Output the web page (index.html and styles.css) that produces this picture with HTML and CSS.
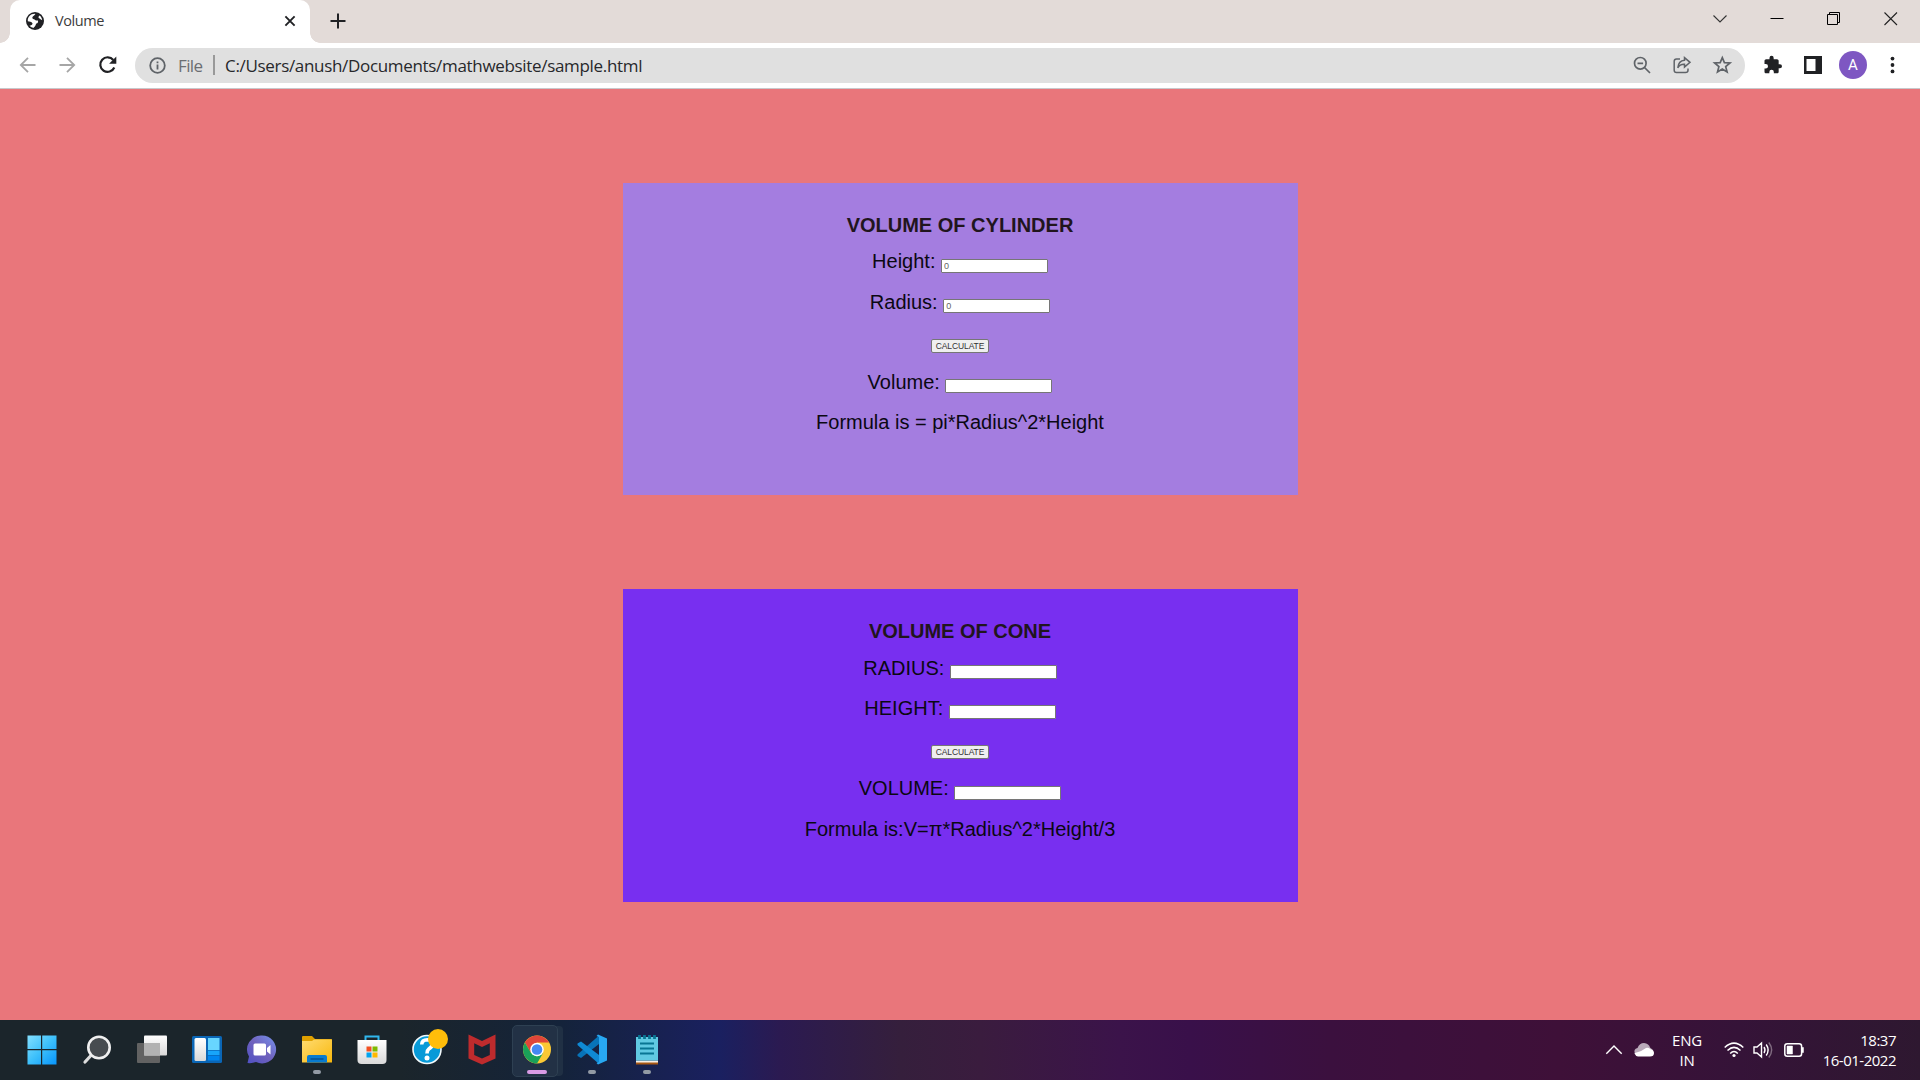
FILE: index.html
```html
<!DOCTYPE html>
<html lang="en">
<head>
<meta charset="utf-8">
<title>Volume</title>
<link rel="stylesheet" href="styles.css">
</head>
<body>
<div class="screen">
  <header class="tabstrip">
    <div class="tab">
      <svg class="favicon" width="18" height="18" viewBox="0 0 18 18"><circle cx="9" cy="9" r="9" fill="#202124"/><path d="M9.400 1.900C8 4 6.500 3.800 6.300 5.700 6.300 7 8 7 8.600 7.600 9.400 8.800 10.800 8.600 11.900 8.500 12.500 10 11.800 11.300 10.300 11.500 9.600 12.800 9.500 14.500 7.300 15.900 6.200 15.800 4.500 15 3.500 13.600 5 13.500 6.700 13 6.500 11.200 5.500 9.500 3.500 9.800 1.800 9.200 1.500 5 4.800 1.500 9.400 1.900ZM13.500 3.500C12.300 4.500 12 6 13.600 6.600 14.600 7 15 8 16.200 8.200 16 6.200 15 4.500 13.500 3.500Z" fill="#fff"/></svg>
      <span class="tab-title">Volume</span>
      <svg width="12" height="12" viewBox="0 0 12 12" fill="none" stroke="#202124" stroke-width="1.9"><path d="M1.400 1.400 10.600 10.600M10.600 1.400 1.400 10.600"/></svg>
    </div>
    <svg class="new-tab" width="16" height="16" viewBox="0 0 16 16" fill="none" stroke="#202124" stroke-width="2"><path d="M8 .5V15.500M.5 8H15.500"/></svg>
    <div class="window-controls">
      <svg width="14" height="14" viewBox="0 0 14 14" fill="none" stroke="#333" stroke-width="1.100"><path d="M.5 3.500 7 10 13.500 3.500"/></svg>
      <svg width="14" height="14" viewBox="0 0 14 14" fill="none" stroke="#000"><path d="M.5 6.500H13.500"/></svg>
      <svg width="14" height="14" viewBox="0 0 14 14" fill="none" stroke="#000"><path d="M.5 2.500H10.500V12.500H.5ZM2.500 2.500V.5H12.500V10.500H10.500"/></svg>
      <svg width="14" height="14" viewBox="0 0 14 14" fill="none" stroke="#222" stroke-width="1.100"><path d="M.5 .5 13 13M13 .5 .5 13"/></svg>
    </div>
  </header>

  <nav class="toolbar">
    <div class="nav-buttons">
      <svg width="18" height="18" viewBox="0 0 18 18" fill="none" stroke="#a6a6a6" stroke-width="1.800"><path d="M16.500 9H2M9 1.800 1.800 9 9 16.200"/></svg>
      <svg width="18" height="18" viewBox="0 0 18 18" fill="none" stroke="#a6a6a6" stroke-width="1.800"><path d="M.5 9H15M8 1.800 15.200 9 8 16.200"/></svg>
      <svg width="18" height="18" viewBox="0 0 18 18"><path d="M14.300 4A7.300 7.300 0 1 0 15.300 11.500" fill="none" stroke="#202124" stroke-width="2.200"/><path d="M17.300 .6V7.800H10.100Z" fill="#202124"/></svg>
    </div>
    <div class="omnibox">
      <svg width="17" height="17" viewBox="0 0 17 17" fill="none" stroke="#5f6368" stroke-width="1.800"><circle cx="8.500" cy="8.500" r="7.300"/><path d="M8.500 7.500V12.500M8.500 4.400V6.200"/></svg>
      <span class="scheme">File</span>
      <span class="divider"></span>
      <span class="url">C:/Users/anush/Documents/mathwebsite/sample.html</span>
      <div class="page-actions">
        <svg width="18" height="18" viewBox="0 0 18 18" fill="none" stroke="#5f6368" stroke-width="1.700"><circle cx="7.300" cy="7.300" r="5.800"/><path d="M4.500 7.300H10.100M11.500 11.500 17 17"/></svg>
        <svg width="18" height="18" viewBox="0 0 18 18" fill="none" stroke="#5f6368" stroke-width="1.500"><path d="M7 3H3.500Q1.200 3 1.200 5.300V14.200Q1.200 16.500 3.500 16.500H12.500Q15 16.500 15 14.200V12.500M11.500 1.700 17 6.300 11.500 11V8.300Q7 8 4.800 11.800 5.500 4.800 11.500 4.300Z"/></svg>
        <svg width="18" height="18" viewBox="0 0 18 18" fill="none" stroke="#5f6368" stroke-width="1.700"><path d="M9.300 1.700 11.400 6.600 17 7 12.700 10.600 14.100 16 9.300 13.100 4.500 16 5.900 10.600 1.600 7 7.200 6.600Z"/></svg>
      </div>
    </div>
    <div class="browser-actions">
      <svg width="20" height="20" viewBox="0 0 24 24" fill="#202124"><path d="M21.500 11H20V7c0-1.100-.9-2-2-2h-4V3.500a2.500 2.500 0 0 0-5 0V5H5c-1.100 0-2 .9-2 2v3.800h1.500a2.700 2.700 0 0 1 0 5.400H3V20c0 1.100.9 2 2 2h3.800v-1.500a2.700 2.700 0 0 1 5.400 0V22H18c1.100 0 2-.9 2-2v-4h1.500a2.500 2.500 0 0 0 0-5z"/></svg>
      <svg width="18" height="18" viewBox="0 0 18 18"><path d="M0 0H18V18H0ZM2.500 3V15H11.500V3Z" fill="#202124" fill-rule="evenodd"/></svg>
      <span class="avatar">A</span>
      <svg width="4" height="18" viewBox="0 0 4 18" fill="#202124"><circle cx="1.500" cy="2.600" r="1.900"/><circle cx="1.500" cy="9" r="1.900"/><circle cx="1.500" cy="15.400" r="1.900"/></svg>
    </div>
  </nav>

  <main class="page">
    <section class="card cylinder">
      <h1>VOLUME OF CYLINDER</h1>
      <div class="row"><label>Height:</label><input placeholder="0"></div>
      <div class="row"><label>Radius:</label><input placeholder="0"></div>
      <div class="row"><button>CALCULATE</button></div>
      <div class="row"><label>Volume:</label><input></div>
      <div class="row">Formula is = pi*Radius^2*Height</div>
    </section>
    <section class="card cone">
      <h1>VOLUME OF CONE</h1>
      <div class="row"><label>RADIUS:</label><input></div>
      <div class="row"><label>HEIGHT:</label><input></div>
      <div class="row"><button>CALCULATE</button></div>
      <div class="row"><label>VOLUME:</label><input></div>
      <div class="row">Formula is:V=π*Radius^2*Height/3</div>
    </section>
  </main>

  <footer class="taskbar">
    <svg width="0" height="0" class="defs"><defs>
      <linearGradient id="win" x1="0" y1="0" x2="1" y2="1" gradientUnits="objectBoundingBox"><stop stop-color="#84e0ff"/><stop offset=".5" stop-color="#3dc0fb"/><stop offset="1" stop-color="#0794fb"/></linearGradient>
      <linearGradient id="white" x1="0" y1="0" x2="0" y2="1"><stop stop-color="#fff"/><stop offset="1" stop-color="#d9d9d9"/></linearGradient>
      <linearGradient id="chat" x1="0" y1="1" x2="1" y2="0"><stop stop-color="#4f50c4"/><stop offset=".5" stop-color="#7062bd"/><stop offset="1" stop-color="#7593ee"/></linearGradient>
      <linearGradient id="folder" x1="0" y1="0" x2="1" y2="1"><stop stop-color="#ffdb70"/><stop offset="1" stop-color="#f8b80d"/></linearGradient>
    </defs></svg>
    <div class="apps">
      <div class="app"><svg viewBox="0 0 30 30"><path d="M.5 .5H14V14H.5ZM15.200 .5H29.500V14H15.200ZM.5 15.200H14V29.500H.5ZM15.200 15.200H29.500V29.500H15.200Z" fill="url(#win)"/></svg></div>
      <div class="app"><svg viewBox="0 0 30 30"><path d="M8.500 21 3 27" stroke="#ddd" stroke-width="3.200" stroke-linecap="round"/><circle cx="17" cy="12.500" r="10.700" fill="#474c50" stroke="#f0f0f0" stroke-width="2.600"/></svg></div>
      <div class="app"><svg viewBox="0 0 30 30"><rect y="8" width="23" height="20" rx="1" fill="#626262"/><rect x="7" y=".5" width="23" height="20" rx="1" fill="url(#white)"/><path d="M7 8H23V20.500H7Z" fill="#b2b2b2"/></svg></div>
      <div class="app"><svg viewBox="0 0 30 30"><rect y="1" width="30" height="27" rx="1.500" fill="#0a66b6"/><rect x="2.500" y="3" width="11.500" height="23" rx="1.500" fill="url(#white)"/><path d="M16 3H27.500V15H16Z" fill="#68d5ff"/><path d="M16 15.700H27.500V20H16Z" fill="#18a5fa"/><path d="M16 20.700H27.500V25.500H16Z" fill="#0085ef"/></svg></div>
      <div class="app"><svg viewBox="0 0 30 30"><path d="M15 .5A14 14 0 1 1 9 27.100Q5 28.500 .5 28L2 21.500A14 14 0 0 1 15 .5Z" fill="url(#chat)"/><rect x="6.500" y="8.500" width="12.500" height="12" rx="1.500" fill="#fff"/><path d="M20 13 23.500 10V19.500L20 16.500Z" fill="#fff"/></svg></div>
      <div class="app running"><svg viewBox="0 0 30 30"><path d="M0 2Q0 1 1 1H10L13 4H29Q30 4 30 5V12H0Z" fill="#dfa000"/><path d="M0 6H10L12 4.500H30V27.500H0Z" fill="url(#folder)"/><path d="M5 27.500V22Q5 20 7 20H23Q25 20 25 22V27.500Z" fill="#087bd0"/><path d="M8.500 24H21.500" stroke="#064b8a" stroke-width="1.300"/></svg></div>
      <div class="app"><svg viewBox="0 0 30 30"><path d="M8.500 6V1.500H21.500V6" fill="none" stroke="#30b7ee" stroke-width="2"/><path d="M.5 5H29.500V25Q29.500 29 25.500 29H4.500Q.5 29 .5 25Z" fill="url(#white)"/><path d="M9.500 11.500H14.500V16.500H9.500Z" fill="#f25022"/><path d="M15.500 11.500H20.500V16.500H15.500Z" fill="#7fba00"/><path d="M9.500 17.500H14.500V22.500H9.500Z" fill="#00a4ef"/><path d="M15.500 17.500H20.500V22.500H15.500Z" fill="#ffb900"/></svg></div>
      <div class="app help"><svg viewBox="0 0 30 30"><circle cx="15" cy="14.500" r="14" fill="#079ad8" stroke="#f1f8fa" stroke-width="1.600"/><path d="M9.700 9.500Q10 4.800 15.200 4.800 20.500 5 20.300 9.500 20 12 16.800 14 15 15.300 15 18.500" fill="none" stroke="#fff" stroke-width="3.600"/><circle cx="15" cy="23" r="2.500" fill="#fff"/></svg><span class="badge"></span></div>
      <div class="app"><svg viewBox="0 0 30 30"><path d="M1.500-.5 15 6 28.500-.5V23.500L15 29.500 1.500 23.500ZM7.200 8.300V20L15 23.600 22.800 20V8.300L15 12Z" fill="#be2b2d" fill-rule="evenodd"/></svg></div>
      <div class="app active"><svg viewBox="0 0 30 30"><circle cx="15" cy="14.500" r="14" fill="#fbc934"/><path d="M2.880 7.500A14 14 0 0 1 27.120 7.500H15L9 18Z" fill="#e04539"/><path d="M2.880 7.500A14 14 0 0 0 15 28.500L21.100 18 15 21.500 9 18Z" fill="#1aa159"/><circle cx="15" cy="14.500" r="6.800" fill="#fff"/><circle cx="15" cy="14.500" r="5.300" fill="#4688f1"/></svg></div>
      <div class="app running"><svg viewBox="0 0 30 30"><path d="M.5 19.500 22 .5V9L4 23 .5 21Z" fill="#0873b8"/><path d="M.5 8.500 4 6.500 22 20V29L.5 10Z" fill="#0f8ad5"/><path d="M21-.5 30 3.500V25.500L21 29.500 19.500 28 22 27V2L19.500 1Z" fill="#28a8f2"/></svg></div>
      <div class="app running"><svg viewBox="0 0 30 30"><path d="M4 26H26V29.500H4Z" fill="#a85713"/><path d="M4 25.500H26V27.500H4Z" fill="#f4eee6"/><path d="M4 2H26V25.500H4Z" fill="#60c9e2"/><path d="M8 8.500H22M8 13.500H22M8 18.500H22" stroke="#087593" stroke-width="2"/><path d="M7.500 0V4M12.500 0V4M17.500 0V4M22.500 0V4" stroke="#087593" stroke-width="2.800"/></svg></div>
    </div>
    <div class="tray">
      <svg width="18" height="12" viewBox="0 0 18 12" fill="none" stroke="#fff" stroke-width="1.400"><path d="M1.300 9.800 9 2 16.700 9.800"/></svg>
      <svg class="cloud" width="20" height="14" viewBox="0 0 20 14"><path d="M3.500 5Q5.500 0 10 0 15 .5 16 4.500L19 7 17 11 1 11Q-1 6 3.500 5Z" fill="#b9aab9"/><path d="M1 10Q7 9 12 5 15 4 16.500 6.200 20 7 20 10 20 13.500 16 13.500H4Q1.500 13 .5 10.500Z" fill="#fff"/></svg>
      <span class="language">ENG<br>IN</span>
      <svg class="wifi" width="20" height="16" viewBox="0 0 20 16" fill="none" stroke="#fff" stroke-width="1.500"><path d="M.7 5.500Q10-3.200 19.300 5.500M3.500 8.500Q10 2.300 16.500 8.500M6.200 11.500Q10 7.700 13.800 11.500"/><circle cx="10" cy="13.500" r="1.600" fill="#fff" stroke="none"/></svg>
      <svg class="sound" width="20" height="18" viewBox="0 0 20 18" fill="none" stroke="#fff" stroke-width="1.400"><path d="M1 6H4L8.500 2V16L4 12H1ZM11 6Q13 9 11 12M13.200 3.500Q17 9 13.200 14.500"/><path d="M15.800 1.500Q21.500 9 15.800 16.500" stroke="#806c80"/></svg>
      <svg class="battery" width="21" height="14" viewBox="0 0 21 14"><rect x=".8" y=".8" width="16.800" height="12.400" rx="2.500" fill="none" stroke="#fff" stroke-width="1.500"/><path d="M3 3H8.500V11H3ZM18 4.500H19.500V9.500H18Z" fill="#fff" stroke="#fff" stroke-width=".5"/></svg>
      <span class="clock">18:37<br>16-01-2022</span>
    </div>
  </footer>
</div>
</body>
</html>
```
FILE: styles.css
```css
* { box-sizing: border-box; }
body { margin: 0; overflow: hidden; font-family: "Open Sans", sans-serif; }
svg { display: block; flex: none; overflow: visible; }
.screen { display: flex; flex-direction: column; width: 1920px; height: 1080px; }

.tabstrip { display: flex; height: 43px; background: #e3dbd8; }
.tab {
  position: relative; display: flex; align-items: center;
  width: 300px; height: 43px; margin-left: 10px; padding: 0 14px 1px 16px;
  border-radius: 10px 10px 0 0; background: #fff;
}
.tab::before, .tab::after {
  content: ""; position: absolute; bottom: 0; width: 10px; height: 10px;
}
.tab::before { left: -10px; background: radial-gradient(circle at 0 0, transparent 9.500px, #fff 10px); }
.tab::after { right: -10px; background: radial-gradient(circle at 100% 0, transparent 9.500px, #fff 10px); }
.tab-title { flex: 1; margin: 0 0 2px 11px; font-size: 14.5px; letter-spacing: -.4px; color: #3c3c3c; }
.new-tab { margin: 13px 0 0 19.5px; }
.window-controls { display: flex; gap: 43px; margin: 12px 22px 0 auto; }

.toolbar { display: flex; align-items: center; height: 46px; padding-bottom: 1px; background: #fff; border-bottom: 1px solid #c8c8cb; }
.nav-buttons { display: flex; gap: 22px; width: 135px; padding-left: 19px; }
.omnibox { display: flex; align-items: center; width: 1610px; height: 35px; padding: 0 14px 0 14px; border-radius: 18px; background: #e0e0e0; }
.scheme { width: 26px; margin-left: 12px; font-size: 17px; letter-spacing: -.6px; color: #6b6e72; }
.divider { width: 2px; height: 20px; margin: 0 10px 0 9px; background: #999; }
.url { font-size: 17px; letter-spacing: -.32px; color: #27282b; white-space: nowrap; }
.page-actions { display: flex; gap: 22px; margin-left: auto; }
.browser-actions { display: flex; align-items: center; margin-left: 17px; }
.browser-actions svg:nth-child(2) { margin-left: 22px; }
.avatar { display: grid; place-items: center; width: 28px; height: 28px; margin: 0 24px 0 17px; border-radius: 50%; background: #7e57c2; color: #fff; font: 15px Roboto, sans-serif; }

.page { height: 931px; padding-top: 94px; background: #e9767b; font-family: "Liberation Sans", sans-serif; font-size: 20px; color: #0b0812; }
.card { width: 675px; margin-left: 623px; padding: 30px 1px 0 0; text-align: center; }
.cylinder { height: 312px; background: #a47de0; }
.cone { height: 313px; margin-top: 94px; background: #782ff0; }
.card h1 { margin: 0 0 12.4px; font-size: 20px; line-height: 24px; color: #21151d; }
.cone h1 { margin-bottom: 12.8px; }
.row { display: flex; justify-content: center; align-items: flex-start; height: 40.2px; line-height: 24px; }
.row label { margin-right: 5.5px; }
.row input { width: 107px; height: 14px; margin: 9.4px 0 0; padding: 0 2px; border: 1px solid #767676; border-radius: 1px; background: #fff; font: 9px "Liberation Sans", sans-serif; }
.row input::placeholder { color: #666; }
.row button { width: 58px; height: 14px; margin-top: 9px; padding: 0; border: 1px solid #767676; border-radius: 2px; background: #efefef; color: #333; font: 8.5px/12px "Liberation Sans", sans-serif; letter-spacing: -.1px; }

.taskbar { display: flex; height: 60px; color: #fff; background: linear-gradient(90deg, #1b252b 0, #1b252b 400px, #14233a 560px, #1a2060 720px, #2b1a51 780px, #351f3c 900px, #3a1c3e 980px, #3b134a 1120px, #39104a 1190px, #3b103e 1330px, #3e1038 1560px, #351338 1740px, #2e1830 1920px); }
.defs { position: absolute; }
.apps { display: flex; margin-left: 14px; }
.app { position: relative; display: flex; justify-content: center; width: 55px; height: 60px; padding-top: 15.4px; }
.app svg { width: 30px; height: 30px; z-index: 1; }
.running::after, .active::after { content: ""; position: absolute; bottom: 6px; left: 23.500px; width: 8px; height: 4px; border-radius: 2px; background: #929aa4; }
.active::after { left: 17.500px; width: 20px; background: #d99be5; }
.active::before { content: ""; position: absolute; left: 3px; top: 5px; width: 44px; height: 50px; border: 1px solid #2e4052; border-radius: 5px; background: #223145; box-shadow: 6px 0 0 -1px #203044; }
.badge { position: absolute; z-index: 2; left: 29px; top: 9px; width: 20px; height: 20px; border-radius: 50%; background: #ffbd0a; }

.tray { display: flex; align-items: center; margin-left: auto; padding: 0 24px 1px 0; font-size: 15px; line-height: 20px; letter-spacing: -.5px; }
.cloud { margin-left: 11px; }
.language { width: 40px; margin-left: 13px; text-align: center; letter-spacing: -.2px; }
.wifi { margin-left: 17px; }
.sound { margin-left: 9px; }
.battery { margin-left: 11px; }
.clock { width: 91px; text-align: right; white-space: nowrap; }
```
